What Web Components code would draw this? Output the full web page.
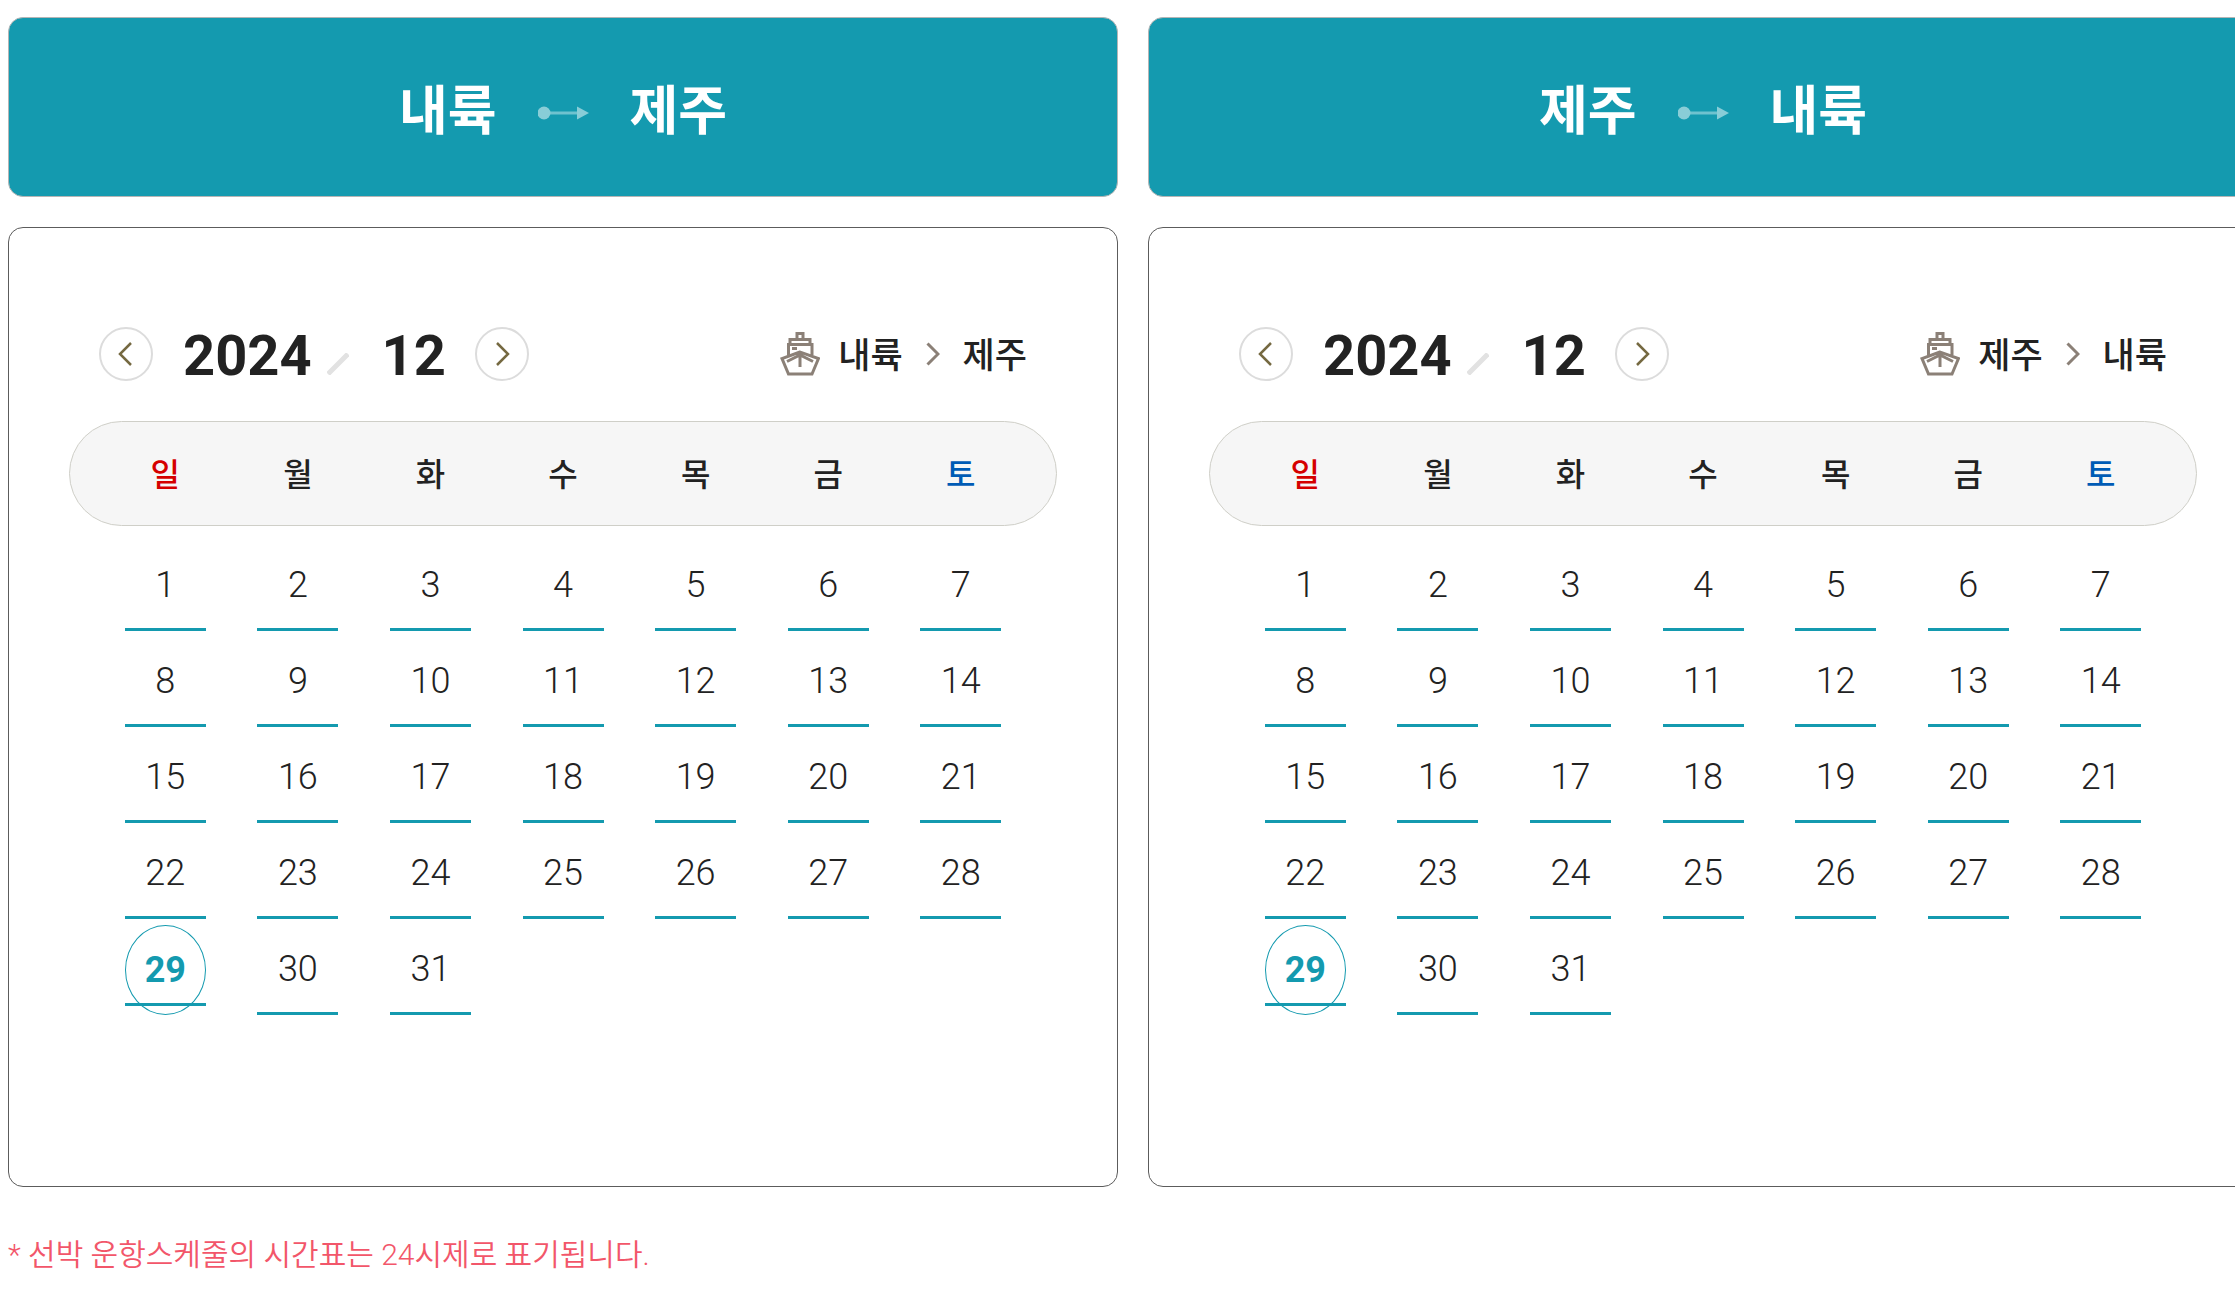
<!DOCTYPE html>
<html lang="ko">
<head>
<meta charset="utf-8">
<title>운항 스케줄</title>
<style>
html{overflow:hidden;background:#fff}
body{margin:0;padding:17px 0 0 8px;color:#222;font-family:Roboto,"Noto Sans CJK KR",sans-serif}
</style>
</head>
<body>
<sailing-schedule>
  <route-schedule from="내륙" to="제주" year="2024" month="12" today="29"></route-schedule>
  <route-schedule from="제주" to="내륙" year="2024" month="12" today="29"></route-schedule>
  <span slot="note">* 선박 운항스케줄의 시간표는 24시제로 표기됩니다.</span>
</sailing-schedule>
<script>
class SailingSchedule extends HTMLElement{
  constructor(){
    super();
    this.attachShadow({mode:'open'}).innerHTML=`<style>
      :host{display:block}
      .columns{display:grid;grid-template-columns:1fr 1fr;gap:30px;margin-right:-23px}
      p{margin:48px 0 0;font-size:30px;line-height:40px;font-weight:350;color:#f2566a}
    </style>
    <div class="columns"><slot></slot></div>
    <p><slot name="note"></slot></p>`;
  }
}
class RouteBanner extends HTMLElement{
  constructor(){
    super();
    this.attachShadow({mode:'open'}).innerHTML=`<style>
      :host{display:block}
      h2{box-sizing:border-box;height:180px;margin:0;padding-top:10px;display:flex;align-items:center;justify-content:center;gap:41px;
        border:1px solid #b5b5b5;border-radius:15px;background:#149aaf;color:#fff;font-size:53px;line-height:76px;font-weight:700}
      svg{display:block;margin-top:2px}
    </style>
    <h2><slot name="from"></slot>
      <svg width="51" height="14" viewBox="0 0 51 14" aria-hidden="true"><path d="M10 7H42" stroke="#6fc2cf" stroke-width="3"/><circle cx="6" cy="7" r="6.500" fill="#89cdd7"/><path d="M39 0.500L51 7L39 13.500Z" fill="#89cdd7"/></svg>
      <slot name="to"></slot></h2>`;
  }
}
class MonthNav extends HTMLElement{
  constructor(){
    super();
    this.attachShadow({mode:'open'}).innerHTML=`<style>
      :host{display:flex;align-items:center}
      button{box-sizing:border-box;width:54px;height:54px;padding:0;display:grid;place-items:center;border:2px solid #dcdcdc;border-radius:50%;background:#fff}
      svg{display:block}
      .date{display:flex;align-items:center;margin:0 29px 0 30px;padding-top:4px;font-size:56px;line-height:60px;font-weight:700}
      .date svg{margin:16px 33px 0 15px}
    </style>
    <button type="button" aria-label="이전 달"><svg width="16" height="26" viewBox="0 0 16 26" fill="none" stroke="#756941" stroke-width="2.500"><path d="M13 2L2 13L13 24"/></svg></button>
    <div class="date"><slot name="year"></slot><svg width="22" height="22" viewBox="0 0 22 22"><path d="M1 21L21 1" stroke="#e2e2e2" stroke-width="5"/></svg><slot name="month"></slot></div>
    <button type="button" aria-label="다음 달"><svg width="16" height="26" viewBox="0 0 16 26" fill="none" stroke="#756941" stroke-width="2.500"><path d="M3 2L14 13L3 24"/></svg></button>`;
  }
}
class RouteLabel extends HTMLElement{
  constructor(){
    super();
    this.attachShadow({mode:'open'}).innerHTML=`<style>
      :host{display:flex;align-items:center;font-size:35px;line-height:50px;font-weight:500}
      svg{display:block}
      .ship{margin-right:18px}
      .arrow{margin:0 23px}
      ::slotted(span){display:block;padding-top:5px}
    </style>
    <svg class="ship" width="40" height="44" viewBox="0 0 40 44" fill="none" stroke="#8b8077" stroke-width="3"><path d="M17 7V1.500H23V7M10 12V7.500H30V12M8.500 23V12.500H32V23M12 16.500H17M20 20L2 26.500L8.500 42H32L38.500 26.500ZM20 20V35M7 29.500L20 23L33 29.500"/></svg>
    <slot name="from"></slot>
    <svg class="arrow" width="14" height="24" viewBox="0 0 14 24" fill="none" stroke="#8b8077" stroke-width="3"><path d="M1.500 1.500L12 12L1.500 22.500"/></svg>
    <slot name="to"></slot>`;
  }
}
class MonthGrid extends HTMLElement{
  connectedCallback(){
    const year=+this.getAttribute('year'),month=+this.getAttribute('month'),today=+this.getAttribute('today');
    const first=new Date(year,month-1,1).getDay(),last=new Date(year,month,0).getDate();
    const names=['일','월','화','수','목','금','토'];
    let rows='';
    for(let d=1-first;d<=last;d+=7){
      rows+='<tr>';
      for(let i=d;i<d+7;i++){
        rows+=i<1||i>last?'<td></td>':`<td><button type="button"${i===today?' class="today" aria-current="date"':''}><span>${i}</span></button></td>`;
      }
      rows+='</tr>';
    }
    this.attachShadow({mode:'open'}).innerHTML=`<style>
      :host{display:block}
      table,thead,tbody{display:block}
      tr{display:flex;padding:0 30px}
      th,td{flex:1;padding:0;display:flex;justify-content:center}
      thead tr{box-sizing:border-box;height:105px;align-items:center;border:1px solid #cfcfc8;border-radius:53px;background:#f6f6f6;padding:2px 29px 0}
      th{font-size:32px;line-height:46px;font-weight:500}
      th:first-child{color:#d50000}
      th:last-child{color:#005bb5}
      tbody{padding-top:9px}
      button{box-sizing:border-box;width:81px;height:96px;padding:0;border:0;background:none;color:#222;font:300 36px/67px Roboto,sans-serif;display:block}
      span{display:block;padding:17px 0 9px;border-bottom:3px solid #149aaf}
      .today{display:flex;flex-direction:column;justify-content:flex-start;height:90px;margin-top:6px;border:1px solid #149aaf;border-radius:50%;color:#149aaf;font-weight:700}
      .today span{align-self:stretch;margin:0 -1px;padding:12px 0 0;line-height:65px}
    </style>
    <table><thead><tr>${names.map(n=>`<th scope="col">${n}</th>`).join('')}</tr></thead><tbody>${rows}</tbody></table>`;
  }
}
class RouteSchedule extends HTMLElement{
  connectedCallback(){
    const a=n=>this.getAttribute(n);
    this.attachShadow({mode:'open'}).innerHTML=`<style>
      :host{display:flex;flex-direction:column;gap:30px;min-width:0}
      section{box-sizing:border-box;min-height:960px;padding:99px 60px 60px;border:1px solid #5c5c5c;border-radius:15px;background:#fff}
      header{display:flex;justify-content:space-between;align-items:center;height:54px;padding:0 30px;margin-bottom:40px}
    </style>
    <route-banner><span slot="from">${a('from')}</span><span slot="to">${a('to')}</span></route-banner>
    <section>
      <header>
        <month-nav><span slot="year">${a('year')}</span><span slot="month">${a('month')}</span></month-nav>
        <route-label><span slot="from">${a('from')}</span><span slot="to">${a('to')}</span></route-label>
      </header>
      <month-grid year="${a('year')}" month="${a('month')}" today="${a('today')}"></month-grid>
    </section>`;
  }
}
customElements.define('sailing-schedule',SailingSchedule);
customElements.define('route-banner',RouteBanner);
customElements.define('month-nav',MonthNav);
customElements.define('route-label',RouteLabel);
customElements.define('month-grid',MonthGrid);
customElements.define('route-schedule',RouteSchedule);
</script>
</body>
</html>
